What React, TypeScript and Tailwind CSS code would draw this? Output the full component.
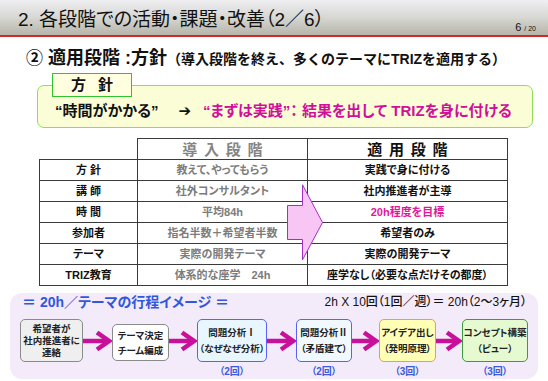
import React from 'react';

interface Row {
  label: string;
  intro: string;
  apply: string;
  hot?: boolean;
}

const rows: Row[] = [
  { label: '方 針', intro: '教えて、やってもらう', apply: '実践で身に付ける' },
  { label: '講 師', intro: '社外コンサルタント', apply: '社内推進者が主導' },
  { label: '時 間', intro: '平均84h', apply: '20h程度を目標', hot: true },
  { label: '参加者', intro: '指名半数＋希望者半数', apply: '希望者のみ' },
  { label: 'テーマ', intro: '実際の開発テーマ', apply: '実際の開発テーマ' },
  { label: 'TRIZ教育', intro: '体系的な座学　24h', apply: '座学なし（必要な点だけその都度）' },
];

interface Step {
  lines: string[];
  box: string;
  count?: string;
}

const steps: Step[] = [
  { lines: ['希望者が', '社内推進者に', '連絡'], box: 'w-[63px] h-[43px] leading-[12px] border-[#8a8a8a] bg-[#efefef]' },
  { lines: ['テーマ決定', 'チーム編成'], box: 'w-[57px] h-[37px] mt-[5px] leading-[15px] border-[#8a8a8a] bg-white' },
  { lines: ['問題分析Ⅰ', '（なぜなぜ分析）'], box: 'w-[70px] h-[43px] leading-[16px] border-[#5f5ff5] bg-[#e8f7ff]', count: '（2回）' },
  { lines: ['問題分析Ⅱ', '（矛盾建て）'], box: 'w-[56px] h-[43px] leading-[16px] border-[#5f5ff5] bg-[#f0f9ff]', count: '（2回）' },
  { lines: ['アイデア出し', '（発明原理）'], box: 'w-[57px] h-[43px] leading-[16px] border-[#f39a4c] bg-[#ffffb6]', count: '（3回）' },
  { lines: ['コンセプト構築', '（ピュー）'], box: 'w-[66px] h-[43px] leading-[16px] border-[#3d9b3d] bg-[#e5fad0]', count: '（3回）' },
];

const gaps = [29, 28, 29, 27, 26];

function FlowArrow({ w }: { w: number }) {
  return (
    <svg width={w} height={43} className="shrink-0">
      <line x1={0} y1={22} x2={w - 4} y2={22} stroke="#c8109a" strokeWidth={4.5} />
      <polyline
        points={`${w - 15},13.5 ${w - 3},22 ${w - 15},30.5`}
        fill="none"
        stroke="#c8109a"
        strokeWidth={4.5}
        strokeLinejoin="miter"
      />
    </svg>
  );
}

export default function App() {
  return (
    <div className="w-[548px] h-[381px] overflow-hidden bg-white text-[#111] font-['Liberation_Sans','Noto_Sans_CJK_JP','DejaVu_Sans',sans-serif] [font-feature-settings:'palt']">
      {/* title bar */}
      <div className="h-[37px] border-b-2 border-[#d02828] bg-linear-to-b from-[#efeef1] via-[#d7d7d3] to-[#b5b5a9] flex justify-between items-start pl-[18px] pr-[12px]">
        <div className="pt-[8px] text-[19px] leading-[24px]">2. 各段階での活動・課題・改善（2／6）</div>
        <div className="self-end text-[11px] leading-[12px]">
          6 <span className="text-[7px]">/ 20</span>
        </div>
      </div>

      {/* subtitle */}
      <div className="mt-[12px] ml-[26px] flex items-baseline font-bold leading-[18px]">
        <span className="text-[17px]">②</span>
        <span className="ml-[5px] text-[18px]">適用段階 :方針</span>
        <span className="text-[14px] [font-feature-settings:normal]">（導入段階を終え、多くのテーマにTRIZを適用する）</span>
      </div>

      {/* policy box */}
      <div className="relative mt-[17px] ml-[37px] w-[496px] h-[43px] rounded-[7px] border border-[#8ede5a] bg-[#fafdd6] flex items-center pl-[17px] pt-[10px] font-bold text-[15px]">
        <div className="absolute left-[14px] top-[-13px] w-[80px] h-[24px] border border-[#2fc52f] bg-[#ffffe0] flex items-center justify-center gap-[12px] text-[15px]">
          <span>方</span>
          <span>針</span>
        </div>
        <span>“時間がかかる”</span>
        <span className="ml-[20px]">➔</span>
        <span className="ml-[12px] text-[#d0109a]">“まずは実践”： 結果を出して TRIZを身に付ける</span>
      </div>

      {/* comparison table */}
      <div className="relative mt-[10px] ml-[39px] w-[468px]">
        <table className="table-fixed border-collapse w-[468px] text-[11px] font-bold">
          <colgroup>
            <col className="w-[98px]" />
            <col className="w-[170px]" />
            <col className="w-[200px]" />
          </colgroup>
          <thead>
            <tr className="h-[21px]">
              <th className="p-0"></th>
              <th className="p-0 border border-[#3a3a3a] text-[15px] leading-none text-[#858585] tracking-[0.45em] pl-[0.45em] font-bold">導入段階</th>
              <th className="p-0 border border-[#3a3a3a] text-[15px] leading-none tracking-[0.45em] pl-[0.45em] font-bold">適用段階</th>
            </tr>
          </thead>
          <tbody>
            {rows.map((r) => (
              <tr key={r.label} className="h-[21px]">
                <td className="p-0 border border-[#3a3a3a] text-center leading-none">{r.label}</td>
                <td className="p-0 border border-[#3a3a3a] text-center leading-none text-[#7c7c7c]">{r.intro}</td>
                <td className={`p-0 border border-[#3a3a3a] text-center leading-none ${r.hot ? 'text-[#e0189a]' : ''}`}>{r.apply}</td>
              </tr>
            ))}
          </tbody>
        </table>
        <svg className="absolute left-[248px] top-[46px]" width={37} height={77} viewBox="0 0 37 77">
          <polygon
            points="0.5,21.5 15.5,21.5 15.5,0.8 35.5,38.5 15.5,75.8 15.5,55.5 0.5,55.5"
            fill="#f8c6f4"
            stroke="#a52ec6"
            strokeWidth={1}
          />
        </svg>
      </div>

      {/* schedule image */}
      <div className="mt-[7px] ml-[10px] w-[528px] h-[86px] rounded-[12px] bg-[#f4ebfa]">
        <div className="h-[18px] flex items-center justify-between pl-[12px] pr-[11px]">
          <span className="text-[14px] font-bold text-[#3157dc]">＝ 20h／テーマの行程イメージ ＝</span>
          <span className="text-[12px] font-medium">2h X 10回（1回／週）＝ 20h（2～3ヶ月）</span>
        </div>
        <div className="mt-[8px] pl-[10px] flex items-start">
          {steps.map((s, i) => (
            <React.Fragment key={i}>
              <div className="flex flex-col items-center shrink-0">
                <div className={`rounded-[5px] border flex flex-col items-center justify-center text-[9.5px] font-bold text-[#222] ${s.box}`}>
                  {s.lines.map((l) => (
                    <span key={l} className="whitespace-nowrap">{l}</span>
                  ))}
                </div>
                {s.count && (
                  <span className="mt-[3px] text-[10px] leading-[14px] font-bold text-[#3b5bd9]">{s.count}</span>
                )}
              </div>
              {i < gaps.length && <FlowArrow w={gaps[i]} />}
            </React.Fragment>
          ))}
        </div>
      </div>
    </div>
  );
}
